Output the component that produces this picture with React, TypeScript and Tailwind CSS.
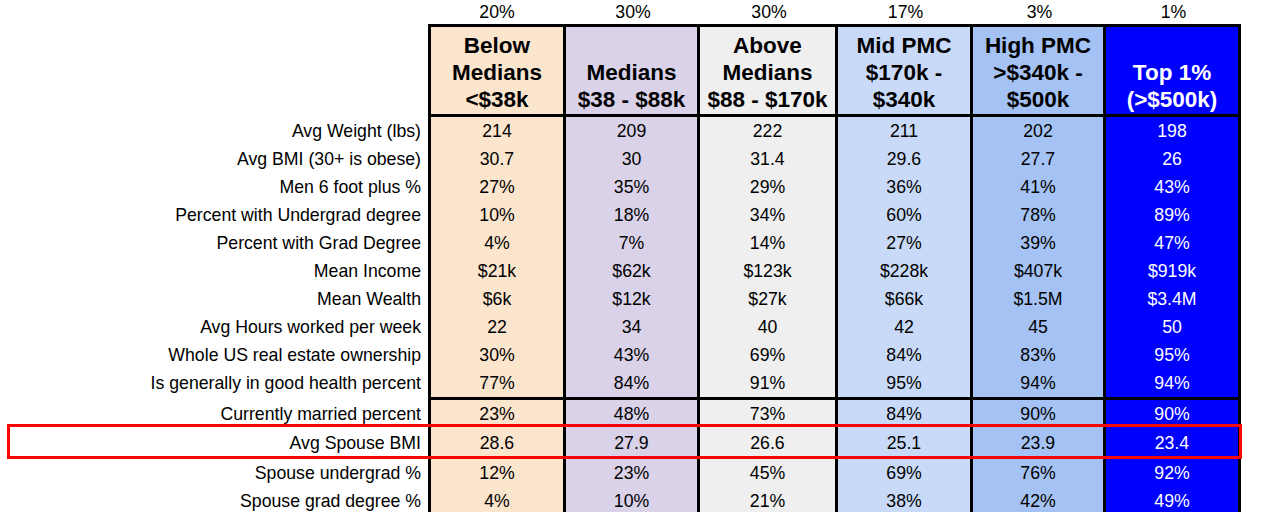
const cols = [
  { pct: "20%", head: ["Below", "Medians", "<$38k"], bg: "bg-[#fce5cd]", text: "text-black", edge: "border-l-[3px]" },
  { pct: "30%", head: ["Medians", "$38 - $88k"], bg: "bg-[#d9d2e9]", text: "text-black", edge: "" },
  { pct: "30%", head: ["Above", "Medians", "$88 - $170k"], bg: "bg-[#efefef]", text: "text-black", edge: "" },
  { pct: "17%", head: ["Mid PMC", "$170k -", "$340k"], bg: "bg-[#c9daf8]", text: "text-black", edge: "" },
  { pct: "3%", head: ["High PMC", ">$340k -", "$500k"], bg: "bg-[#a4c2f4]", text: "text-black", edge: "" },
  { pct: "1%", head: ["Top 1%", "(>$500k)"], bg: "bg-[#0000ff]", text: "text-white", edge: "" },
];

type Row = { label: string; values: string[]; h: string; top?: boolean };

const rows: Row[] = [
  { label: "Avg Weight (lbs)", values: ["214", "209", "222", "211", "202", "198"], h: "h-[28px]" },
  { label: "Avg BMI (30+ is obese)", values: ["30.7", "30", "31.4", "29.6", "27.7", "26"], h: "h-[28px]" },
  { label: "Men 6 foot plus %", values: ["27%", "35%", "29%", "36%", "41%", "43%"], h: "h-[28px]" },
  { label: "Percent with Undergrad degree", values: ["10%", "18%", "34%", "60%", "78%", "89%"], h: "h-[28px]" },
  { label: "Percent with Grad Degree", values: ["4%", "7%", "14%", "27%", "39%", "47%"], h: "h-[28px]" },
  { label: "Mean Income", values: ["$21k", "$62k", "$123k", "$228k", "$407k", "$919k"], h: "h-[28px]" },
  { label: "Mean Wealth", values: ["$6k", "$12k", "$27k", "$66k", "$1.5M", "$3.4M"], h: "h-[28px]" },
  { label: "Avg Hours worked per week", values: ["22", "34", "40", "42", "45", "50"], h: "h-[28px]" },
  { label: "Whole US real estate ownership", values: ["30%", "43%", "69%", "84%", "83%", "95%"], h: "h-[28px]" },
  { label: "Is generally in good health percent", values: ["77%", "84%", "91%", "95%", "94%", "94%"], h: "h-[28px]" },
  { label: "Currently married percent", values: ["23%", "48%", "73%", "84%", "90%", "90%"], h: "h-[31px]", top: true },
  { label: "Avg Spouse BMI", values: ["28.6", "27.9", "26.6", "25.1", "23.9", "23.4"], h: "h-[30px]" },
  { label: "Spouse undergrad %", values: ["12%", "23%", "45%", "69%", "76%", "92%"], h: "h-[29px]" },
  { label: "Spouse grad degree %", values: ["4%", "10%", "21%", "38%", "42%", "49%"], h: "h-[28px]" },
];

export default function App() {
  return (
    <div className="relative h-[512px] w-[1262px] overflow-hidden bg-white text-[17.7px] text-black [font-family:'Liberation_Sans',Arial,sans-serif]">
      <div className="grid grid-cols-[428px_138px_134px_138px_135px_133px_135px]">
        {/* share of population */}
        <div className="h-[24px]" />
        {cols.map((c, i) => (
          <div key={i} className="flex h-[24px] items-center justify-center leading-[24px]">
            {c.pct}
          </div>
        ))}

        {/* header */}
        <div />
        {cols.map((c, i) => (
          <div
            key={i}
            className={`flex h-[93px] flex-col items-center justify-end border-y-[3px] border-r-[3px] border-black pb-[1px] text-center text-[22.5px] font-bold leading-[27px] ${c.edge} ${c.bg} ${c.text}`}
          >
            {c.head.map((l) => (
              <div key={l} className="whitespace-nowrap">{l}</div>
            ))}
          </div>
        ))}

        {rows.map((r) => (
          <>
            <div key={r.label} className={`flex items-center justify-end whitespace-nowrap pr-[7px] leading-[28px] ${r.h} ${r.top ? "pt-[3px]" : ""}`}>
              {r.label}
            </div>
            {r.values.map((v, i) => (
              <div
                key={r.label + i}
                className={`flex items-center justify-center border-r-[3px] border-black leading-[28px] ${r.h} ${r.top ? "border-t-[3px]" : ""} ${cols[i].edge} ${cols[i].bg} ${cols[i].text}`}
              >
                {v}
              </div>
            ))}
          </>
        ))}
      </div>

      {/* highlight around spouse BMI row */}
      <div className="pointer-events-none absolute left-[7px] top-[424px] h-[35px] w-[1235px] border-[3px] border-[#ff0000]" />
    </div>
  );
}
